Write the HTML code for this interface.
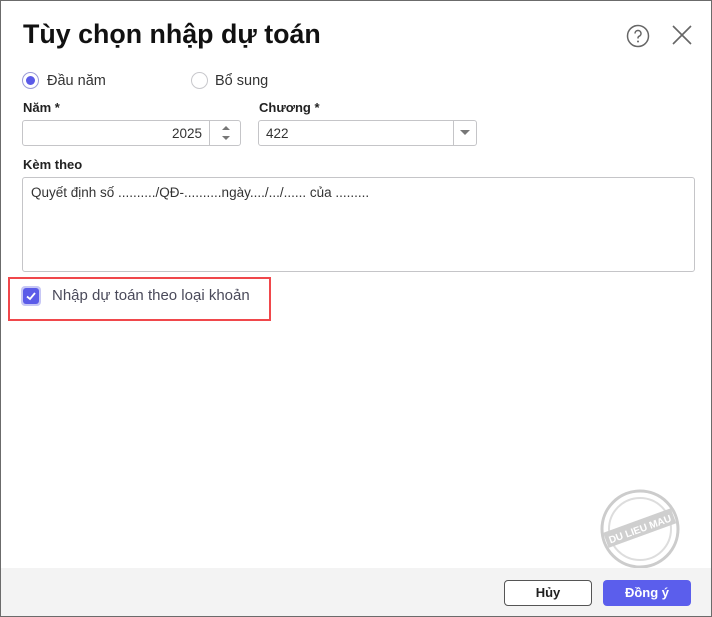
<!DOCTYPE html>
<html><head><meta charset="utf-8"><style>
*{box-sizing:border-box;margin:0;padding:0}
body{width:712px;height:617px;overflow:hidden;font-family:"Liberation Sans",sans-serif;background:#fff;position:relative;color:#212121}
.frame{position:absolute;left:0;top:0;width:712px;height:617px;border:1px solid #6b6b6b}
.abs{position:absolute}
h1{position:absolute;left:23px;top:19px;font-size:26.8px;font-weight:bold;color:#111;white-space:nowrap}
.lbl{font-size:13px;font-weight:bold;color:#222}
.inp{border:1px solid #c5c5c8;border-radius:3px;background:#fff}
.txt{font-size:13.5px;color:#333}
</style></head><body>
<div class="frame"></div>
<h1>Tùy chọn nhập dự toán</h1>
<svg class="abs" style="left:626px;top:24px" width="24" height="24" viewBox="0 0 24 24"><circle cx="12" cy="12" r="10.5" fill="none" stroke="#666" stroke-width="1.5"/><path d="M9 9.5a3 3 0 1 1 4 2.8c-.8.4-1 1-1 1.7v.5" fill="none" stroke="#666" stroke-width="1.5"/><circle cx="12" cy="17.5" r="1" fill="#666"/></svg>
<svg class="abs" style="left:671px;top:24px" width="22" height="22" viewBox="0 0 22 22"><path d="M2 2L20 20M20 2L2 20" stroke="#666" stroke-width="1.6"/></svg>

<div class="abs" style="left:22px;top:72px;width:17px;height:17px;border:1px solid #9b9bd8;border-radius:50%"><div style="position:absolute;left:3px;top:3px;width:9px;height:9px;border-radius:50%;background:#5b5be8"></div></div>
<div class="abs txt" style="left:47px;top:73px;font-size:14.5px">Đầu năm</div>
<div class="abs" style="left:191px;top:72px;width:17px;height:17px;border:1px solid #c8c8cc;border-radius:50%"></div>
<div class="abs txt" style="left:215px;top:73px;font-size:14.5px">Bổ sung</div>

<div class="abs lbl" style="left:23px;top:100px">Năm *</div>
<div class="abs lbl" style="left:259px;top:100px">Chương *</div>
<div class="abs inp" style="left:22px;top:120px;width:219px;height:26px"></div>
<div class="abs" style="left:209px;top:121px;width:1px;height:24px;background:#c5c5c8"></div>
<div class="abs txt" style="left:140px;top:126px;width:62px;text-align:right">2025</div>
<svg class="abs" style="left:220px;top:124px" width="12" height="18"><path d="M2 6L6 2L10 6Z" fill="#777"/><path d="M2 12L6 16L10 12Z" fill="#777"/></svg>
<div class="abs inp" style="left:258px;top:120px;width:219px;height:26px"></div>
<div class="abs" style="left:453px;top:121px;width:1px;height:24px;background:#c5c5c8"></div>
<div class="abs txt" style="left:266px;top:126px">422</div>
<svg class="abs" style="left:459px;top:129px" width="12" height="8"><path d="M1 1L6 6L11 1Z" fill="#777"/></svg>

<div class="abs lbl" style="left:23px;top:157px">Kèm theo</div>
<div class="abs inp" style="left:22px;top:177px;width:673px;height:95px"></div>
<div class="abs txt" style="left:31px;top:185px;font-size:13.5px;white-space:nowrap">Quyết định số ........../QĐ-..........ngày..../.../...... của .........</div>

<div class="abs" style="left:8px;top:277px;width:263px;height:44px;border:2px solid #f0474b"></div>
<div class="abs" style="left:21px;top:286px;width:20px;height:20px;border-radius:4px;background:#c7c7f5"><div style="position:absolute;left:2px;top:2px;width:16px;height:16px;border-radius:3px;background:#5b5be8"></div></div>
<svg class="abs" style="left:25px;top:290px" width="12" height="12"><path d="M2 6.5L5 9L10 3" fill="none" stroke="#fff" stroke-width="1.8"/></svg>
<div class="abs" style="left:52px;top:287px;font-size:15px;color:#4a4a5a;white-space:nowrap">Nhập dự toán theo loại khoản</div>

<svg class="abs" style="left:598px;top:487px" width="84" height="84" viewBox="0 0 84 84"><circle cx="42" cy="42" r="38" fill="none" stroke="#ccc" stroke-width="3"/><circle cx="42" cy="42" r="31" fill="none" stroke="#ddd" stroke-width="2"/><g transform="rotate(-20 42 42)"><rect x="6" y="33" width="72" height="16" fill="#cfcfcf"/><text x="42" y="45.5" font-family="Liberation Sans" font-size="10" font-weight="bold" fill="#fff" text-anchor="middle">DU LIEU MAU</text></g></svg>

<div class="abs" style="left:1px;top:568px;width:710px;height:48px;background:#f3f3f3"></div>
<div class="abs" style="left:504px;top:580px;width:88px;height:26px;border:1px solid #555;border-radius:4px;background:#fff;font-size:13px;font-weight:bold;text-align:center;line-height:24px">Hủy</div>
<div class="abs" style="left:603px;top:580px;width:88px;height:26px;border-radius:4px;background:#5b5eec;color:#fff;font-size:13px;font-weight:bold;text-align:center;line-height:26px">Đồng ý</div>
</body></html>
